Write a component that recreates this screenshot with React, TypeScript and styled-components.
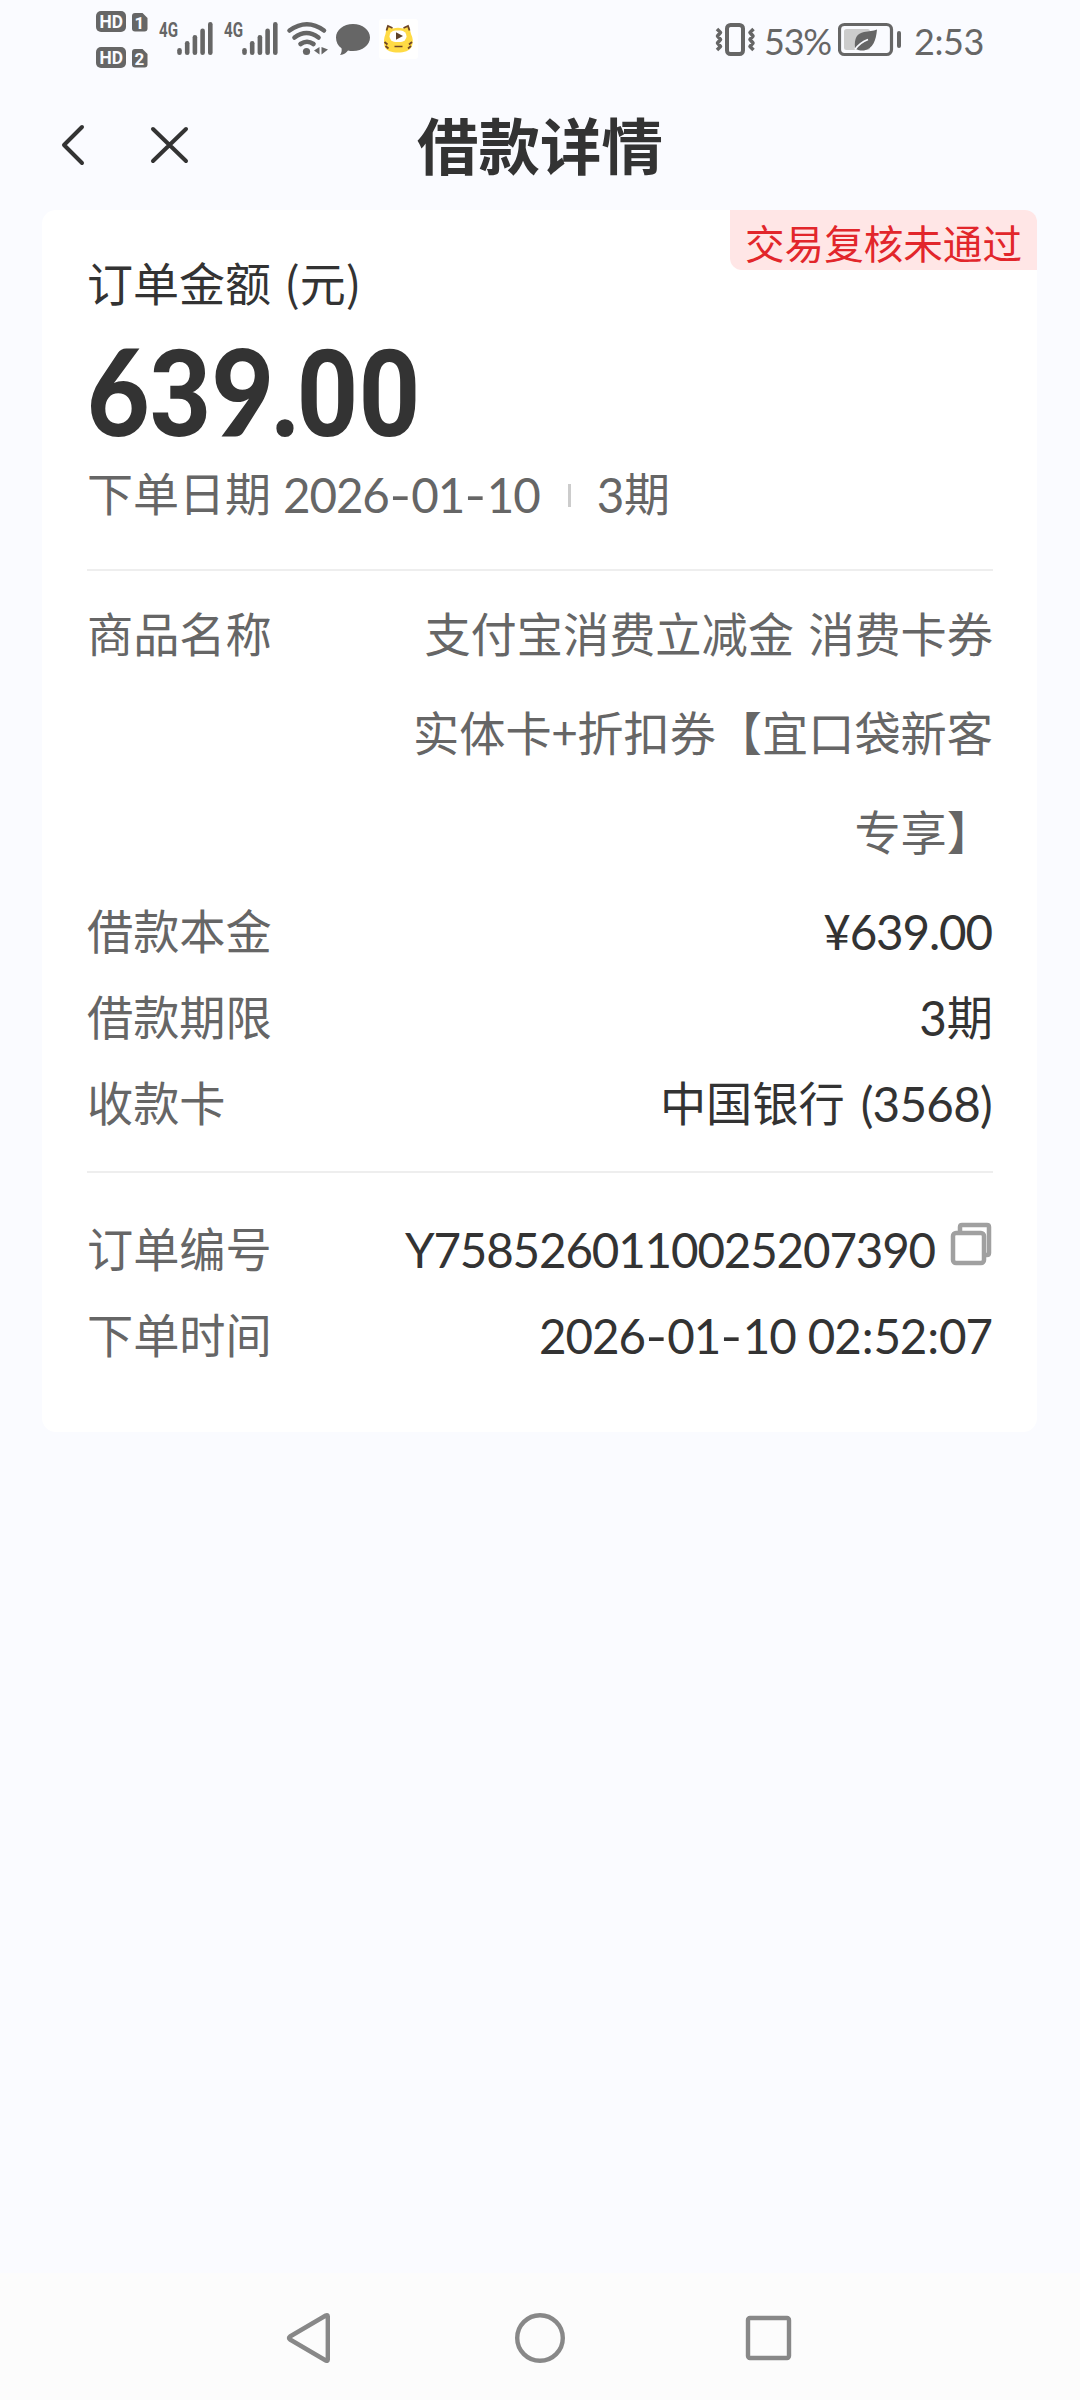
import React from "react";
import styled, { createGlobalStyle } from "styled-components";

const GlobalStyle = createGlobalStyle`
  * { box-sizing: border-box; }
  html, body { margin: 0; padding: 0; background: #fafbff; }
`;

const cjk = `"Noto Sans CJK SC", sans-serif`;

const Screen = styled.div`
  width: 1080px;
  height: 2400px;
  display: flex;
  flex-direction: column;
  background: #fafbff;
  font-family: ${cjk};
  color: #333333;
  overflow: hidden;
  white-space: nowrap;
`;

const StatusBar = styled.div`
  height: 80px;
  flex: none;
  display: flex;
  justify-content: space-between;
  padding: 0 96px 0 94px;
`;

const StatusGroup = styled.div`
  display: flex;
  align-items: flex-start;
`;

const StatusText = styled.span<{ $width: number; $gap?: number; $track?: number }>`
  width: ${(p) => p.$width}px;
  margin-left: ${(p) => p.$gap ?? 0}px;
  letter-spacing: ${(p) => p.$track ?? 0}px;
  font-family: Lato, sans-serif;
  font-size: 36px;
  line-height: 82px;
  color: #666666;
`;

const TitleBar = styled.header`
  height: 130px;
  flex: none;
  display: grid;
  grid-template-columns: 1fr auto 1fr;
  align-items: center;
`;

const TitleActions = styled.div`
  display: flex;
  gap: 58px;
  padding-left: 56px;
`;

const Title = styled.h1`
  margin: 0 0 3px;
  font-size: 61.5px;
  font-weight: 700;
  line-height: 80px;
`;

const Card = styled.main`
  position: relative;
  margin: 0 43px 0 42px;
  height: 1222px;
  flex: none;
  padding: 0 44px 0 45px;
  background: #ffffff;
  border-radius: 14px;
`;

const Badge = styled.div`
  position: absolute;
  top: 0;
  right: 0;
  width: 307px;
  height: 60px;
  text-align: center;
  font-size: 39.6px;
  line-height: 63px;
  color: #e2262b;
  background: #ffe6e6;
  border-radius: 0 12px 0 12px;
`;

const Caption = styled.div`
  padding-top: 38px;
  font-size: 46px;
  line-height: 66px;
  word-spacing: 3px;
`;

const Amount = styled.div`
  height: 130px;
  margin-top: 11px;
  font-family: Roboto, sans-serif;
  font-weight: 700;
  font-size: 121px;
  line-height: 130px;
  transform: scaleX(0.892);
  transform-origin: 0 0;
`;

const Slant = styled.span`
  font-family: Lato, sans-serif;
  font-weight: 900;
`;

const Point = styled.span`
  margin: 0 -5px 0 -5px;
`;

const Summary = styled.div`
  display: flex;
  align-items: center;
  height: 72px;
  font-size: 46px;
  color: #666666;
`;

const Tick = styled.i`
  width: 3px;
  height: 23px;
  margin: 9px 26px 0 27px;
  background: #cccccc;
`;

const NumText = styled.span<{ $track?: number; $lead?: number }>`
  position: relative;
  top: 3px;
  margin-left: ${(p) => p.$lead ?? 0}px;
  margin-right: 1px;
  font-family: Lato, sans-serif;
  font-size: 47.5px;
  letter-spacing: ${(p) => p.$track ?? -1.1}px;
  word-spacing: 1px;
`;

const Dash = styled.span`
  display: inline-block;
  width: 22.5px;
  text-align: center;
  letter-spacing: 0;
  transform: scaleX(1.25);
`;

const Divider = styled.hr<{ $top: number }>`
  margin: ${(p) => p.$top}px 0 0;
  border: 0;
  height: 2px;
  background: #eeeeee;
`;

const Rows = styled.dl<{ $top: number }>`
  margin: 0;
  padding-top: ${(p) => p.$top}px;
`;

const Row = styled.div<{ $line?: number; $after?: number }>`
  display: flex;
  justify-content: space-between;
  margin-bottom: ${(p) => p.$after ?? 0}px;
  font-size: 46.2px;
  line-height: ${(p) => p.$line ?? 86}px;
  word-spacing: 4px;
`;

const Label = styled.dt`
  color: #666666;
`;

const Value = styled.dd<{ $soft?: boolean }>`
  margin: 0;
  display: flex;
  flex-direction: ${(p) => (p.$soft ? "column" : "row")};
  align-items: ${(p) => (p.$soft ? "flex-end" : "center")};
  height: ${(p) => (p.$soft ? "auto" : "86px")};
  color: ${(p) => (p.$soft ? "#666666" : "#333333")};
`;

const CopyIcon = styled.svg`
  margin: 0 1px 6px 14px;
`;

const NavBar = styled.nav`
  height: 127px;
  flex: none;
  margin-top: auto;
  display: flex;
  justify-content: center;
  gap: 169px;
  padding-top: 35px;
  background: #fcfcfc;
`;

const Colon = styled.span`
  margin: 0 1px;
`;

const bars = [48, 41, 35, 28.5, 22];

function Num({ children, track, lead }: { children: string; track?: number; lead?: number }) {
  return (
    <NumText $track={track} $lead={lead}>
      {children.split(/([-:])/).map((part, i) => {
        if (part === "-") return <Dash key={i}>-</Dash>;
        if (part === ":") return <Colon key={i}>:</Colon>;
        return part;
      })}
    </NumText>
  );
}

function Signal({ x }: { x: number }) {
  return (
    <g>
      <text x={x} y="37" fontSize="20" textLength="19" lengthAdjust="spacingAndGlyphs" fontWeight="700">4G</text>
      {bars.map((top, i) => (
        <rect key={top} x={x + 18.2 + i * 7.7} y={top} width="4.6" height={55 - top} rx="2.3" />
      ))}
    </g>
  );
}

function HdMark({ y, n }: { y: number; n: string }) {
  return (
    <g>
      <rect x="2" y={y} width="30" height="21" rx="5" />
      <text x="5.500" y={y + 17} fontSize="19" fontWeight="700" fill="#fafbff" textLength="23.500" lengthAdjust="spacingAndGlyphs">HD</text>
      <path d={`M41 ${y + 2}h7.500l5 5v10.500q0 3-3 3h-9.500q-3 0-3-3v-12.500q0-3 3-3z`} />
      <text x="45.500" y={y + 18} fontSize="17" fontWeight="700" fill="#fafbff" textAnchor="middle">{n}</text>
    </g>
  );
}

function StatusLeft() {
  return (
    <svg width="330" height="80" viewBox="0 0 330 80" fill="#666666" fontFamily="Roboto, sans-serif">
      <HdMark y={11} n="1" />
      <HdMark y={47} n="2" />
      <Signal x={65} />
      <Signal x={130} />
      <g fill="none" stroke="#666666" strokeWidth="4.600" strokeLinecap="round">
        <path d="M195.500 30.500q17.500-12.500 34.500 0" />
        <path d="M200.500 37.500q12-9 24 0" />
        <path d="M206.500 44q6.500-4.500 13 0" />
      </g>
      <circle cx="212.500" cy="51.500" r="3.600" />
      <path d="M225.500 47v7.500l-5.500-4zM227.500 47v7.500l6.500-5z" />
      <path d="M259 24c9.500 0 17 6 17 13.500S268.500 51 259 51c-2 0-3.500-.2-5-.6-1.500 2-4 4.200-8 4.600 1.500-2 2-4.500 1.500-6.800-3.500-2.400-5.500-6.200-5.500-10.700C242 30 249.500 24 259 24z" />
      <rect x="285" y="19" width="39" height="40" rx="3" fill="#ffffff" />
      <path d="M293 26l6 2.500q5-1.500 10 0l6-2.500 2 8q3 6 1 12c-2 5-8 6.500-14 6.500s-12-1.500-13.500-6.500q-1.500-6 1-12z" fill="#ffdb45" />
      <path d="M292.500 30.500l1.500-4.500 4.500 2M315.500 30.500l-1.500-4.500-4.500 2" fill="none" stroke="#6d4528" strokeWidth="1.800" />
      <rect x="295.500" y="30.500" width="17" height="11.500" rx="5.700" fill="#ffffff" />
      <path d="M302 32.200v7.600l7-3.800z" fill="#5d4128" />
      <path d="M300.500 46.500h8" stroke="#6d4528" strokeWidth="1.500" />
      <path d="M290.500 42l3 2.500M291.500 46l3 2.500M318 42l-3 2.500M317 46l-3 2.500" fill="none" stroke="#6d4528" strokeWidth="1.800" />
    </svg>
  );
}

export default function App() {
  return (
    <Screen>
      <GlobalStyle />
      <StatusBar>
        <StatusGroup><StatusLeft /></StatusGroup>
        <StatusGroup>
          <svg width="50" height="80" viewBox="0 0 50 80" fill="none" stroke="#666666">
            <rect x="13" y="25" width="16" height="29" rx="3.500" strokeWidth="4" />
            <path d="M3 29l3.500 3.500-3 3.500 3 3.500-3 3.500 3 3.500L3 50M39.500 29L36 32.500l3 3.500-3 3.500 3 3.500-3 3.500 3.500 3.500" strokeWidth="3.500" strokeLinejoin="round" />
          </svg>
          <StatusText $width={74} $track={-1.2}>53%</StatusText>
          <svg width="64" height="80" viewBox="0 0 64 80">
            <rect x="1.500" y="24.500" width="52" height="30" rx="5" fill="none" stroke="#666666" strokeWidth="3.200" />
            <rect x="6" y="29" width="26" height="21" rx="2.500" fill="#cccccc" />
            <path d="M17 48c-1-10 2-14.500 9-16 5-.8 9-.8 13-2.500-1 11-4 19-13 21-3 .3-5.500 0-6.500-1z" fill="#666666" />
            <path d="M17 49.500q5-7 13-10" fill="none" stroke="#fafbff" strokeWidth="1.800" />
            <rect x="59" y="31" width="4" height="17" rx="2" fill="#666666" />
          </svg>
          <StatusText $width={70} $gap={12} $track={-0.4}>2:53</StatusText>
        </StatusGroup>
      </StatusBar>

      <TitleBar>
        <TitleActions>
          <svg width="34" height="44" viewBox="0 0 34 44" fill="none" stroke="#333333" strokeWidth="4" strokeLinecap="round" strokeLinejoin="round">
            <path d="M26 4L8 22l18 18" />
          </svg>
          <svg width="44" height="44" viewBox="0 0 44 44" fill="none" stroke="#333333" strokeWidth="4" strokeLinecap="round">
            <path d="M5 6l33 32M38 6L5 38" />
          </svg>
        </TitleActions>
        <Title>借款详情</Title>
      </TitleBar>

      <Card>
        <Badge>交易复核未通过</Badge>
        <Caption>订单金额 (元)</Caption>
        <Amount><Slant>6</Slant>3<Slant>9</Slant><Point>.</Point>00</Amount>
        <Summary>
          <span>下单日期</span>
          <Num lead={12}>2026-01-10</Num>
          <Tick />
          <Num>3</Num>
          <span>期</span>
        </Summary>
        <Divider $top={42} />
        <Rows $top={11}>
          <Row $line={99} $after={7}>
            <Label>商品名称</Label>
            <Value $soft>
              <span>支付宝消费立减金 消费卡券</span>
              <span>实体卡+折扣券【宜口袋新客</span>
              <span>专享】</span>
            </Value>
          </Row>
          <Row>
            <Label>借款本金</Label>
            <Value><Num>¥639.00</Num></Value>
          </Row>
          <Row>
            <Label>借款期限</Label>
            <Value><Num>3</Num>期</Value>
          </Row>
          <Row>
            <Label>收款卡</Label>
            <Value>中国银行<Num lead={16} track={-0.7}>(3568)</Num></Value>
          </Row>
        </Rows>
        <Divider $top={27} />
        <Rows $top={31}>
          <Row>
            <Label>订单编号</Label>
            <Value>
              <Num track={-1.15}>Y7585260110025207390</Num>
              <CopyIcon width="42" height="44" viewBox="0 0 42 44" fill="none" stroke="#a0a0a0" strokeWidth="4.500" strokeLinejoin="round">
                <rect x="3" y="11" width="31" height="30" rx="3" />
                <path d="M10 10V5q0-2 2-2h25q2 0 2 2v26q0 2-2 2h-2" />
              </CopyIcon>
            </Value>
          </Row>
          <Row>
            <Label>下单时间</Label>
            <Value><Num>2026-01-10 02:52:07</Num></Value>
          </Row>
        </Rows>
      </Card>

      <NavBar>
        <svg width="60" height="60" viewBox="0 0 60 60" fill="none" stroke="#888888" strokeWidth="4.400" strokeLinejoin="round">
          <path d="M46.800 8.500v43q0 2-2 1L9 31.500q-2-1.500 0-3L44.800 7.500q2-1 2 1z" />
        </svg>
        <svg width="60" height="60" viewBox="0 0 60 60" fill="none" stroke="#888888" strokeWidth="4.400">
          <circle cx="30" cy="30" r="22.800" />
        </svg>
        <svg width="60" height="60" viewBox="0 0 60 60" fill="none" stroke="#888888" strokeWidth="4.400">
          <rect x="9" y="10" width="41" height="40" rx="2" />
        </svg>
      </NavBar>
    </Screen>
  );
}
